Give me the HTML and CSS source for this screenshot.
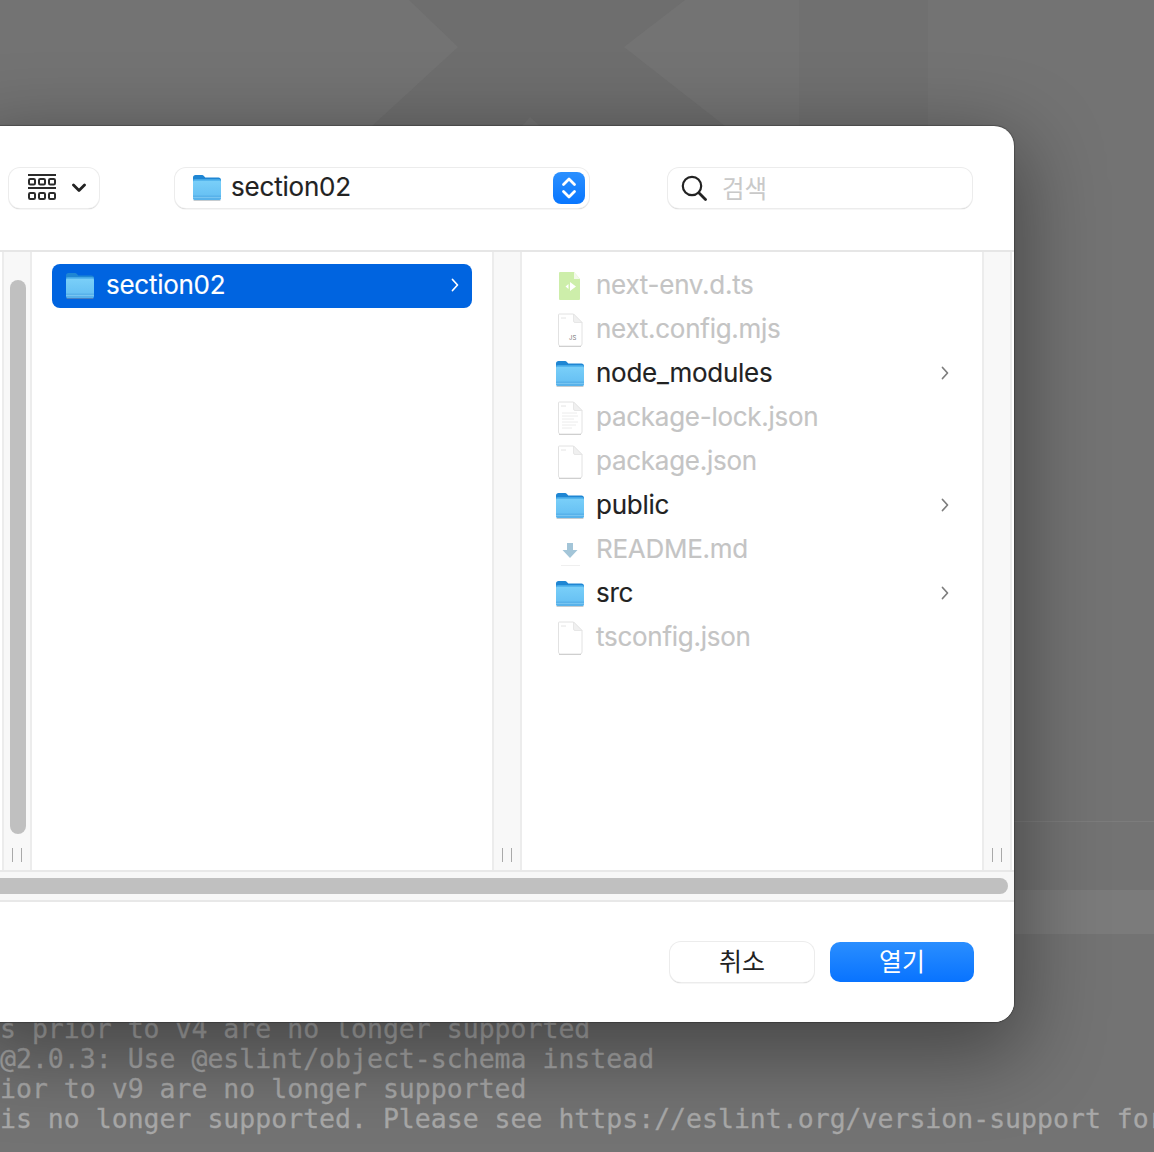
FILE: index.html
```html
<!DOCTYPE html>
<html lang="ko">
<head>
<meta charset="utf-8">
<title>section02</title>
<link rel="stylesheet" href="styles.css">
</head>
<body>
<svg class="defs" width="0" height="0" aria-hidden="true">
  <defs>
    <linearGradient id="fb" x1="0" y1="0" x2="0" y2="1">
      <stop offset="0" stop-color="#7bd0f9"/>
      <stop offset="1" stop-color="#62bdf2"/>
    </linearGradient>
    <symbol id="folder" viewBox="0 0 30 28">
      <path d="M1 4.500C1 3 2 2 3.500 2h6.200c1 0 1.500.3 2.200 1l1.400 1.500h13.200c1.500 0 2.500 1 2.500 2.500v3H1z" fill="#1f86d3"/>
      <rect x="1" y="6.400" width="28" height="20.600" rx="2" fill="url(#fb)"/>
      <rect x="1" y="6.400" width="28" height="1.200" fill="#3fa6e6"/>
      <path d="M1 22.500h28V25a2 2 0 0 1-2 2H3a2 2 0 0 1-2-2z" fill="#58b2ea"/>
      <path d="M1 24.500h28" stroke="#86cdf3" stroke-width=".7"/>
      <path d="M1.600 27.600h26.800" stroke="#8f9aa3" stroke-width=".8" opacity=".7"/>
    </symbol>
    <symbol id="page" viewBox="0 0 26 34">
      <path d="M2.500 1h14L25 9.500V31a2 2 0 0 1-2 2H3.500a2 2 0 0 1-2-2V2a1 1 0 0 1 1-1z" fill="#fff" stroke="#e2e2e2"/>
      <path d="M16.500 1v7a1.500 1.500 0 0 0 1.500 1.500h7z" fill="#f0f0f0" stroke="#e2e2e2" stroke-width=".8"/>
      <path d="M4 5h5" stroke="#e4e4e4"/>
      <path d="M2 33.500h22" stroke="#cfcfcf"/>
    </symbol>
  </defs>
</svg>

<main class="screen">
  <svg class="wallpaper" viewBox="0 0 1154 1152" aria-hidden="true">
    <rect class="wall-col" x="799" y="0" width="129" height="820"/>
    <polygon class="wall-x" points="409,0 685,0 624,47 725,126 372,126 458,47"/>
    <polygon class="wall-tri" points="522,126 530,117 540,126"/>
    <rect class="wall-band" x="1000" y="890" width="154" height="44"/>
    <rect class="wall-line" x="1000" y="821" width="154" height="1"/>
  </svg>

  <pre class="terminal">s prior to v4 are no longer supported
@2.0.3: Use @eslint/object-schema instead
ior to v9 are no longer supported
is no longer supported. Please see https://eslint.org/version-support for</pre>

  <section class="dialog">
    <header class="toolbar">
      <button class="ctl view-btn">
        <svg class="grid-icon" viewBox="0 0 28 28" aria-hidden="true">
          <path d="M0 1h28M0 14h28" stroke="#2b2b2b" stroke-width="1.800"/>
          <g fill="none" stroke="#2b2b2b" stroke-width="2">
            <rect x="1" y="5" width="6" height="5.500" rx="1.300"/><rect x="11" y="5" width="6" height="5.500" rx="1.300"/><rect x="21" y="5" width="6" height="5.500" rx="1.300"/>
            <rect x="1" y="19" width="6" height="6" rx="1.300"/><rect x="11" y="19" width="6" height="6" rx="1.300"/><rect x="21" y="19" width="6" height="6" rx="1.300"/>
          </g>
        </svg>
        <svg class="down-icon" viewBox="0 0 14 10" aria-hidden="true"><path d="M1.500 2l5.500 5.500L12.500 2" fill="none" stroke="#222" stroke-width="2.800" stroke-linecap="round" stroke-linejoin="round"/></svg>
      </button>
      <div class="ctl path-btn">
        <svg class="ico-folder"><use href="#folder"/></svg>
        <span class="path-name">section02</span>
        <span class="stepper">
          <svg viewBox="0 0 32 32" aria-hidden="true"><path d="M10.500 12.500L16 7l5.500 5.500M10.500 19.500L16 25l5.500-5.500" fill="none" stroke="#fff" stroke-width="2.800" stroke-linecap="round" stroke-linejoin="round"/></svg>
        </span>
      </div>
      <div class="ctl search">
        <svg class="search-icon" viewBox="0 0 26 26" aria-hidden="true"><circle cx="11" cy="11" r="9.200" fill="none" stroke="#222" stroke-width="2.200"/><path d="M17.800 17.800L24.500 24.500" stroke="#222" stroke-width="2.800" stroke-linecap="round"/></svg>
        <span class="placeholder">검색</span>
      </div>
    </header>

    <div class="browser">
      <div class="gutter gutter-first">
        <span class="v-thumb"></span>
        <span class="handle"></span>
      </div>
      <div class="column">
        <div class="row selected">
          <svg class="ico-folder"><use href="#folder"/></svg>
          <span class="name">section02</span>
          <svg class="chev" viewBox="0 0 8 14" aria-hidden="true"><path d="M1.500 1.500L6.500 7l-5 5.500" fill="none" stroke="#fff" stroke-width="1.700" stroke-linecap="round" stroke-linejoin="round"/></svg>
        </div>
      </div>
      <div class="gutter"><span class="handle"></span></div>
      <div class="column">
        <div class="row off">
          <svg class="ico-file" viewBox="0 0 26 34" aria-hidden="true"><path d="M3 3h14l6 7v20a1 1 0 0 1-1 1H3a1 1 0 0 1-1-1V4a1 1 0 0 1 1-1z" fill="#cdeeaa"/><path d="M17 3v7h6z" fill="#f3f9ea"/><path d="M13 13l6 4.500-6 4.500zM11.500 15l-3 2.500 3 2.500z" fill="#fff"/></svg>
          <span class="name">next-env.d.ts</span>
        </div>
        <div class="row off">
          <svg class="ico-file"><use href="#page"/></svg>
          <span class="name">next.config.mjs</span>
          <span class="js-tag">JS</span>
        </div>
        <div class="row">
          <svg class="ico-folder"><use href="#folder"/></svg>
          <span class="name">node_modules</span>
          <svg class="chev chev-dark" viewBox="0 0 8 14" aria-hidden="true"><path d="M1.500 1.500L6.500 7l-5 5.500" fill="none" stroke="#7d7d7d" stroke-width="1.700" stroke-linecap="round" stroke-linejoin="round"/></svg>
        </div>
        <div class="row off">
          <svg class="ico-file" viewBox="0 0 26 34" aria-hidden="true"><use href="#page"/><path d="M5 12h15M5 15h16M5 18h12M5 21h16M5 24h14M5 27h10" stroke="#ececec"/></svg>
          <span class="name">package-lock.json</span>
        </div>
        <div class="row off">
          <svg class="ico-file"><use href="#page"/></svg>
          <span class="name">package.json</span>
        </div>
        <div class="row">
          <svg class="ico-folder"><use href="#folder"/></svg>
          <span class="name">public</span>
          <svg class="chev chev-dark" viewBox="0 0 8 14" aria-hidden="true"><path d="M1.500 1.500L6.500 7l-5 5.500" fill="none" stroke="#7d7d7d" stroke-width="1.700" stroke-linecap="round" stroke-linejoin="round"/></svg>
        </div>
        <div class="row off">
          <svg class="ico-file" viewBox="0 0 26 34" aria-hidden="true"><path d="M5 1h12l7 7v23H3V3z" fill="#fff"/><path d="M4 32.500h19" stroke="#efefef"/><path d="M10 10h6v7h4.500L13 25l-7.500-8H10z" fill="#a3c5d8"/></svg>
          <span class="name">README.md</span>
        </div>
        <div class="row">
          <svg class="ico-folder"><use href="#folder"/></svg>
          <span class="name">src</span>
          <svg class="chev chev-dark" viewBox="0 0 8 14" aria-hidden="true"><path d="M1.500 1.500L6.500 7l-5 5.500" fill="none" stroke="#7d7d7d" stroke-width="1.700" stroke-linecap="round" stroke-linejoin="round"/></svg>
        </div>
        <div class="row off">
          <svg class="ico-file"><use href="#page"/></svg>
          <span class="name">tsconfig.json</span>
        </div>
      </div>
      <div class="gutter gutter-last"><span class="handle"></span></div>
    </div>

    <div class="h-scroll"><span class="h-thumb"></span></div>

    <footer class="actions">
      <button class="ctl action">취소</button>
      <button class="action primary">열기</button>
    </footer>
  </section>
</main>
</body>
</html>
```

FILE: styles.css
```css
* { box-sizing: border-box; }
html, body { margin: 0; padding: 0; }
body { width: 1154px; height: 1152px; overflow: hidden; font-family: Inter, "Noto Sans CJK KR", sans-serif; }
.defs { position: absolute; }

.screen { position: relative; width: 1154px; height: 1152px; overflow: hidden; background: #737373; }
.wallpaper { position: absolute; inset: 0; width: 1154px; height: 1152px; }
.wall-col { fill: #707070; }
.wall-x { fill: #6e6e6e; }
.wall-tri { fill: #737373; }
.wall-band { fill: #7b7b7b; }
.wall-line { fill: #7c7c7c; }

.terminal {
  position: absolute; left: 0; top: 1014px; margin: 0;
  font: 26.5px/30px "DejaVu Sans Mono", monospace;
  -webkit-text-stroke: .3px #a8a8a8;
  color: #a8a8a8; white-space: pre;
}

.dialog {
  position: absolute; left: -20px; top: 126px; width: 1034px; height: 896px;
  display: flex; flex-direction: column;
  background: #fff; border-radius: 0 20px 20px 0;
  box-shadow: 0 24px 80px 10px rgba(0,0,0,.38), 0 0 1px 1px rgba(0,0,0,.25);
}

.toolbar { height: 124px; padding: 42px 0 0 29px; display: flex; align-items: flex-start; flex: none; }
.ctl {
  height: 40px; border: 0; background: #fff; border-radius: 11px;
  box-shadow: 0 0 0 1px #ececec, 0 1px 1px 0 rgba(0,0,0,.38);
}
.view-btn { width: 90px; display: flex; align-items: center; padding: 0 0 0 19px; }
.grid-icon { width: 28px; height: 28px; display: block; }
.down-icon { width: 14px; height: 10px; margin-left: 16px; }
.path-btn { width: 414px; margin-left: 76px; display: flex; align-items: center; padding: 0 4px 0 17px; gap: 9px; }
.path-name { flex: 1; font-size: 26px; line-height: 36px; height: 39px; color: #222; letter-spacing: -.2px; -webkit-text-stroke: .15px currentColor; }
.stepper { width: 32px; height: 32px; border-radius: 8px; background: linear-gradient(#2b90ff, #0876ff); }
.stepper svg { display: block; width: 32px; height: 32px; }
.search { width: 304px; margin-left: 79px; display: flex; align-items: center; padding: 0 0 0 13px; }
.search-icon { width: 26px; height: 26px; }
.placeholder { margin-left: 15px; font-size: 24.500px; line-height: 36px; height: 34px; color: #c9c9c9; }

.ico-folder { width: 30px; height: 28px; flex: none; display: block; margin-top: -2px; }
.ico-file { width: 26px; height: 34px; flex: none; display: block; margin: 0 2px; }

.browser { flex: none; height: 622px; display: flex; border-top: 2px solid #e6e6e6; border-bottom: 2px solid #e8e8e8; padding-left: 22px; }
.gutter { width: 30px; flex: none; position: relative; background: #f8f8f8; border-left: 2px solid #ececec; border-right: 2px solid #ececec; }
.handle { position: absolute; bottom: 8px; left: 8px; width: 10px; height: 14px; border-left: 1.500px solid #a9a9a9; border-right: 1.500px solid #a9a9a9; }
.v-thumb { position: absolute; left: 6px; top: 28px; width: 16px; height: 554px; border-radius: 8px; background: #c0c0c0; }

.column { width: 460px; flex: none; padding: 12px 20px 0; position: relative; background: #fff; }
.row { height: 44px; display: flex; align-items: center; padding: 0 13px 0 13px; border-radius: 8px; position: relative; }
.name { margin-left: 11px; flex: 1; font-size: 26px; line-height: 36px; height: 39px; color: #222; letter-spacing: -.27px; -webkit-text-stroke: .15px currentColor; }
.off .name { color: #c4c4c4; }
.selected { background: #0064e0; }
.selected .name { color: #fff; }
.chev { width: 8px; height: 14px; flex: none; margin-top: -2px; }
.js-tag { position: absolute; left: 27px; top: 26px; font-size: 6px; color: #777; }

.h-scroll { height: 28px; flex: none; background: #f7f7f7; padding: 6px 6px 6px 0; }
.h-thumb { display: block; height: 16px; background: #c0c0c0; border-radius: 0 8px 8px 0; }

.actions { flex: none; height: 122px; display: flex; justify-content: flex-end; align-items: flex-start; gap: 16px; padding: 40px 40px 0 0; background: #fff; border-radius: 0 0 20px 0; border-top: 2px solid #e8e8e8; }
.action { width: 144px; height: 40px; padding: 0 0 7px; font: 25px "Noto Sans CJK KR", sans-serif; color: #222; }
.primary { border: 0; border-radius: 10px; color: #fff; background: linear-gradient(#2a8eff, #0873ff); }
```
